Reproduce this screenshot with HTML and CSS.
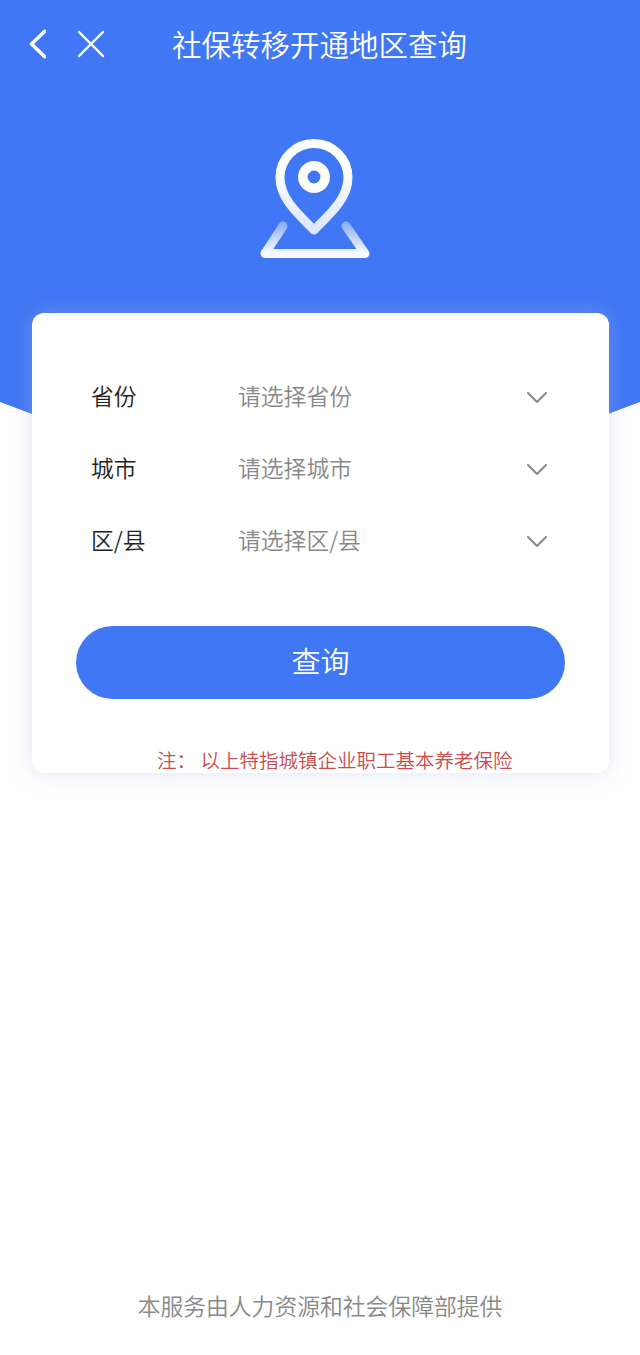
FILE: index.html
```html
<!DOCTYPE html>
<html lang="zh-CN">
  <head>
    <meta charset="utf-8">
    <title>社保转移开通地区查询</title>
    <link rel="stylesheet" href="styles.css">
  </head>
  <body>
    <div class="page">
      <div class="hero">
        <div class="navbar">
          <svg class="back" width="18" height="30" viewBox="0 0 18 30">
            <path d="M16.500 2.500 L3.500 15 L16.500 27.500" />
          </svg>
          <svg class="close" width="28" height="28" viewBox="0 0 28 28">
            <path d="M2 2 L26 26 M26 2 L2 26" />
          </svg>
          <h1 class="title">社保转移开通地区查询</h1>
        </div>
        <svg class="pin" width="112" height="122" viewBox="0 0 112 122">
          <defs>
            <linearGradient id="pinFill" gradientUnits="userSpaceOnUse" x1="0" y1="0" x2="0" y2="98">
              <stop offset="0.3" stop-color="#fff" />
              <stop offset="1" stop-color="#fff" stop-opacity="0.8" />
            </linearGradient>
            <linearGradient id="baseFill" gradientUnits="userSpaceOnUse" x1="0" y1="82" x2="0" y2="115">
              <stop offset="0" stop-color="#fff" stop-opacity="0.35" />
              <stop offset="1" stop-color="#fff" stop-opacity="0.96" />
            </linearGradient>
          </defs>
          <path d="M24 88 L6 115.500 H106 L87 88" stroke="url(#baseFill)" stroke-width="9" />
          <path d="M55 92 C38 75 21 60 21 39.500 A34 34 0 0 1 89 39.500 C89 60 72 75 55 92 Z" stroke="url(#pinFill)" stroke-width="9" />
          <circle cx="55" cy="39" r="11.200" stroke="#fff" stroke-width="9.500" />
        </svg>
      </div>

      <div class="card">
        <form id="query-form">
          <div class="row">
            <span class="label">省份</span>
            <span class="value">请选择省份</span>
            <svg class="arrow" width="22" height="14" viewBox="0 0 22 14">
              <path d="M2 2 L11 11 L20 2" />
            </svg>
          </div>
          <div class="row">
            <span class="label">城市</span>
            <span class="value">请选择城市</span>
            <svg class="arrow" width="22" height="14" viewBox="0 0 22 14">
              <path d="M2 2 L11 11 L20 2" />
            </svg>
          </div>
          <div class="row">
            <span class="label">区/县</span>
            <span class="value">请选择区/县</span>
            <svg class="arrow" width="22" height="14" viewBox="0 0 22 14">
              <path d="M2 2 L11 11 L20 2" />
            </svg>
          </div>
          <button type="button" class="submit">查询</button>
        </form>
        <p class="note">注： 以上特指城镇企业职工基本养老保险</p>
      </div>

      <div class="footer">本服务由人力资源和社会保障部提供</div>
    </div>
  </body>
</html>
```

FILE: styles.css
```css
* {
  box-sizing: border-box;
}

body {
  margin: 0;
  background-color: #fefefe;
  font-family: "Noto Sans CJK SC", sans-serif;
  font-weight: 350;
}

svg {
  display: block;
  flex: none;
  fill: none;
  stroke-linecap: round;
  stroke-linejoin: round;
}

.page {
  display: flex;
  flex-direction: column;
  height: 1355px;
}

/* blue banner, bottom edge runs down to a point behind the card */
.hero {
  flex: none;
  height: 522px;
  background-color: #4077f4;
  clip-path: polygon(0 0, 100% 0, 100% 402px, 50% 100%, 0 402px);
}

.navbar {
  display: flex;
  align-items: center;
  height: 88px;
  padding-left: 28px;
}

.back {
  stroke: #fff;
  stroke-width: 3.6;
}

.close {
  margin-left: 31px;
  stroke: #fff;
  stroke-width: 2.4;
}

.title {
  margin: 0 0 2px 67px;
  color: #fff;
  font-size: 29.5px;
  font-weight: 350;
  line-height: 44px;
}

.pin {
  margin: 50px 0 0 259px;
}

.card {
  flex: none;
  position: relative;
  width: 577px;
  height: 460px;
  margin: -209px 0 0 32px;
  padding: 48px 44px 0;
  background-color: #fff;
  border-radius: 12px;
  box-shadow: 0 0 20px rgba(180, 186, 225, 0.36);
}

.row {
  display: flex;
  align-items: center;
  height: 71.7px;
  padding: 0 17px 2px 15px;
  font-size: 22.8px;
}

.label {
  width: 147px;
  color: #222;
}

.value {
  flex: 1;
  color: #888;
}

.arrow {
  margin-top: 5px;
  stroke: #888;
  stroke-width: 2;
}

.submit {
  display: block;
  width: 489px;
  height: 73px;
  margin-top: 50px;
  padding: 0 0 6px;
  border: none;
  border-radius: 37px;
  background-color: #4077f4;
  color: #fff;
  font-family: inherit;
  font-size: 29px;
  font-weight: 350;
}

.note {
  margin: 47px 0 0 81px;
  color: #c94b4b;
  font-size: 19.53px;
  line-height: 28px;
  white-space: nowrap;
}

.footer {
  margin-top: auto;
  padding-bottom: 32px;
  color: #888;
  font-size: 22.8px;
  line-height: 34px;
  text-align: center;
}
```
